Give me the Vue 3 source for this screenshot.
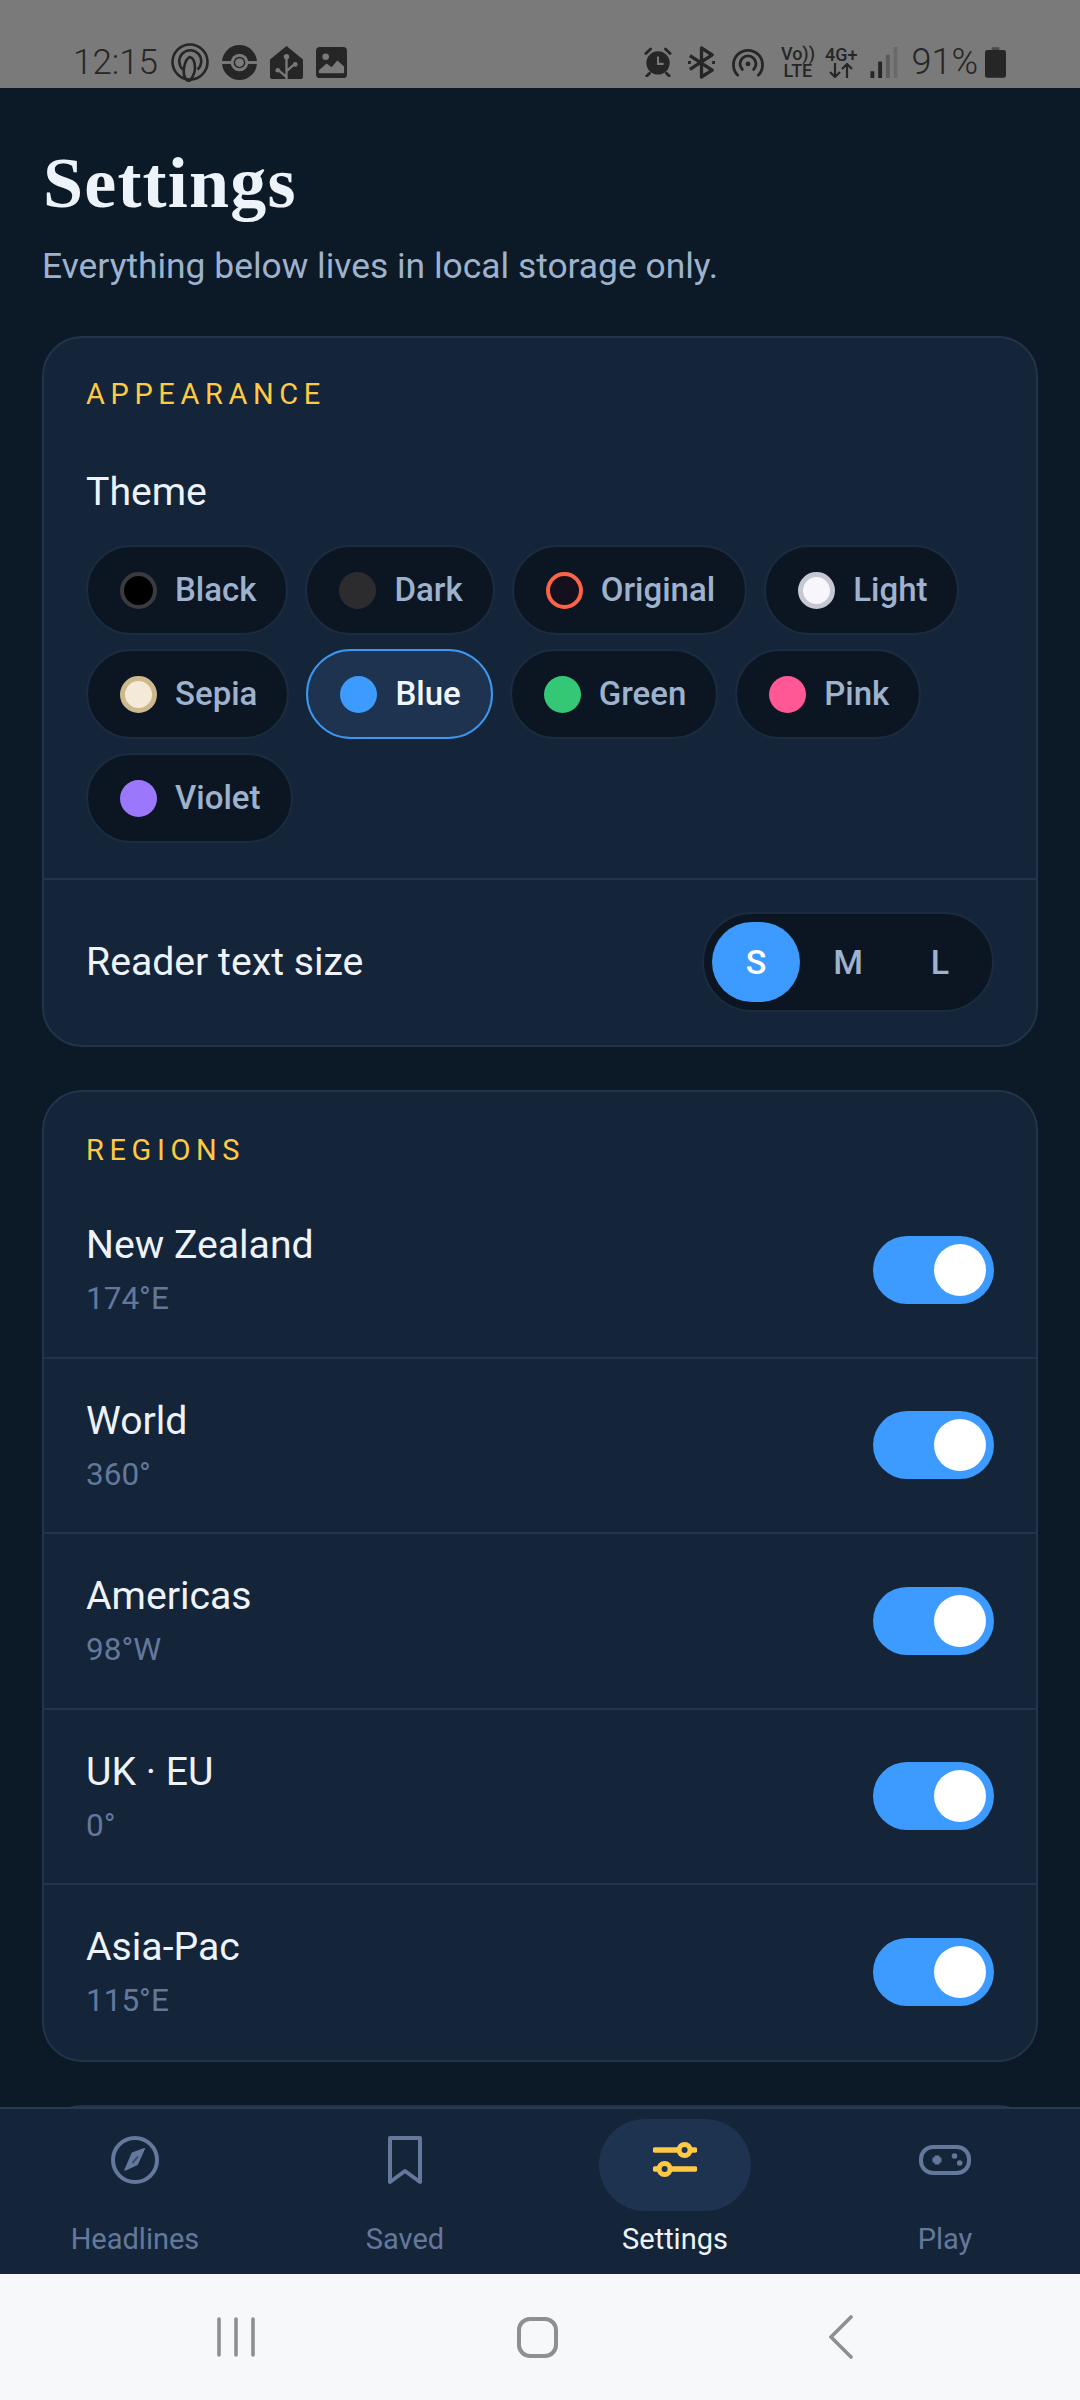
<script setup>
const themes = [
  { name: 'Black', cls: 'd-black' },
  { name: 'Dark', cls: 'd-dark' },
  { name: 'Original', cls: 'd-original' },
  { name: 'Light', cls: 'd-light' },
  { name: 'Sepia', cls: 'd-sepia' },
  { name: 'Blue', cls: 'd-blue', active: true },
  { name: 'Green', cls: 'd-green' },
  { name: 'Pink', cls: 'd-pink' },
  { name: 'Violet', cls: 'd-violet' },
]
const regions = [
  { name: 'New Zealand', sub: '174°E' },
  { name: 'World', sub: '360°' },
  { name: 'Americas', sub: '98°W' },
  { name: 'UK · EU', sub: '0°' },
  { name: 'Asia-Pac', sub: '115°E' },
]
</script>

<template>
  <div class="phone">
    <header class="status">
      <div class="st-left">
        <span class="clock">12:15</span>
        <svg class="si" width="38" height="39" viewBox="0 0 38 39" fill="none" stroke="#262626" stroke-width="2.6"><circle cx="19" cy="19" r="17.500"/><path d="M12 26.500a11 11 0 1 1 14.500 0"/><path d="M19 38c-5 0-7-6-6-13 1-6 3-10 6-11 3 1 5 5 5 11 0 6-3 10-5 13"/></svg>
        <svg class="si" width="35" height="35" viewBox="0 0 36 36"><circle cx="18" cy="18" r="18" fill="#262626"/><rect x="0" y="16.500" width="36" height="3" fill="#7a7a7a"/><circle cx="18" cy="18" r="9" fill="#7a7a7a"/><circle cx="18" cy="18" r="6" fill="#262626"/><circle cx="18" cy="18" r="4.500" fill="#7a7a7a"/></svg>
        <svg class="si" width="33" height="33" viewBox="0 0 34 34"><path d="M17 0 34 14v18a2 2 0 0 1-2 2H2a2 2 0 0 1-2-2V14z" fill="#262626"/><path d="M17 11v23M17 26l8-7M17 32l-8-7" stroke="#7a7a7a" stroke-width="2.400" fill="none"/><circle cx="17" cy="11" r="2.800" fill="#7a7a7a"/><circle cx="26" cy="19" r="2.400" fill="#7a7a7a"/><circle cx="8" cy="25" r="2.400" fill="#7a7a7a"/></svg>
        <svg class="si" width="31" height="31" viewBox="0 0 32 32"><rect width="32" height="32" rx="4" fill="#262626"/><circle cx="10" cy="10" r="3.400" fill="#7a7a7a"/><path d="M3 24l8-7 5 4 6-7 7 6v6a1 1 0 0 1-1 1H4a1 1 0 0 1-1-1z" fill="#7a7a7a"/></svg>
      </div>
      <div class="st-right">
        <svg class="si" width="28" height="30" viewBox="0 0 30 32"><circle cx="15" cy="17" r="12.500" fill="#262626"/><path d="M15 10v8h6" stroke="#7a7a7a" stroke-width="2.200" fill="none"/><path d="M2 7l5-5M28 7l-5-5M6 28l-3 3M24 28l3 3" stroke="#262626" stroke-width="3" stroke-linecap="round"/></svg>
        <svg class="si m1" width="29" height="33" viewBox="0 0 30 34" fill="none" stroke="#262626" stroke-width="3.400" stroke-linejoin="round"><path d="M3 10l23 15-11 7V2l11 7L3 24"/><path d="M1 17h3M26 17h3" stroke-width="3"/></svg>
        <svg class="si m1" width="34" height="30" viewBox="0 0 34 32" fill="none" stroke="#262626" stroke-width="3" stroke-linecap="round"><path d="M6 30a15.500 15.500 0 1 1 22 0"/><path d="M11 24a8.500 8.500 0 1 1 12 0"/><circle cx="17" cy="18" r="2.600" fill="#262626" stroke="none"/></svg>
        <span class="net m2"><span>Vo))</span><span>LTE</span></span>
        <span class="net m-4"><span>4G+</span>
          <svg width="24" height="15" viewBox="0 0 24 15" fill="none" stroke="#262626" stroke-width="2.200"><path d="M6 0v14M1 9l5 5 5-5M18 15V1M13 6l5-5 5 5"/></svg>
        </span>
        <svg class="si m-1" width="28" height="31" viewBox="0 0 28 32"><rect x="0" y="25" width="4" height="7" fill="#262626"/><rect x="8" y="15" width="4" height="17" fill="#262626"/><rect x="16" y="8" width="4" height="24" fill="#5c5c5c"/><rect x="24" y="0" width="4" height="32" fill="#6a6a6a"/></svg>
        <span class="batt m-1">91%</span>
        <svg class="si m-7" width="21" height="31" viewBox="0 0 22 32"><path d="M7 0h8v3H7z" fill="#4a4a4a"/><rect y="3" width="22" height="29" rx="2.500" fill="#262626"/></svg>
      </div>
    </header>

    <main class="page">
      <h1 class="title">Settings</h1>
      <p class="subtitle">Everything below lives in local storage only.</p>

      <section class="card">
        <div class="appearance-top">
          <h2 class="label">APPEARANCE</h2>
          <div class="row-title">Theme</div>
          <div class="chips">
            <div v-for="t in themes" :key="t.name" class="chip" :class="{ on: t.active }">
              <span class="dot" :class="t.cls"></span>
              <span class="chip-text">{{ t.name }}</span>
            </div>
          </div>
        </div>
        <div class="size-row">
          <span class="row-title">Reader text size</span>
          <div class="seg">
            <span class="seg-btn on">S</span>
            <span class="seg-btn">M</span>
            <span class="seg-btn">L</span>
          </div>
        </div>
      </section>

      <section class="card regions">
        <h2 class="label">REGIONS</h2>
        <div v-for="r in regions" :key="r.name" class="region">
          <div class="region-text">
            <div class="row-title">{{ r.name }}</div>
            <div class="region-sub">{{ r.sub }}</div>
          </div>
          <div class="toggle"><span class="knob"></span></div>
        </div>
      </section>

      <section class="card peek"></section>
    </main>

    <nav class="tabs">
      <div class="tab">
        <span class="tab-icon">
          <svg width="48" height="48" viewBox="0 0 48 48" fill="none"><circle cx="24" cy="24" r="22" stroke="#64789c" stroke-width="4"/><path d="M21.300 17.300 33.300 12.700 26.300 28.300 14 34z" fill="#64789c" stroke="#64789c" stroke-width="1.500" stroke-linejoin="round"/><path d="M27 20.500 21.500 27" stroke="#3c4f6e" stroke-width="2"/></svg>
        </span>
        <span class="tab-label">Headlines</span>
      </div>
      <div class="tab">
        <span class="tab-icon">
          <svg width="34" height="48" viewBox="0 0 34 48" fill="none"><path d="M2 2h30v44L17 35 2 46z" stroke="#64789c" stroke-width="4" stroke-linejoin="round"/></svg>
        </span>
        <span class="tab-label">Saved</span>
      </div>
      <div class="tab active">
        <span class="tab-icon">
          <svg width="44" height="36" viewBox="0 0 44 36" fill="none"><path d="M2 8h22M40 8h2M42 27H20M4 27H2" stroke="#ffc943" stroke-width="5.500" stroke-linecap="round"/><circle cx="31.600" cy="8" r="5.500" stroke="#ffc943" stroke-width="5"/><circle cx="11.600" cy="27" r="5.500" stroke="#ffc943" stroke-width="5"/></svg>
        </span>
        <span class="tab-label">Settings</span>
      </div>
      <div class="tab">
        <span class="tab-icon">
          <svg width="52" height="30" viewBox="0 0 52 30" fill="none"><rect x="2" y="2" width="48" height="26" rx="12" stroke="#64789c" stroke-width="4"/><path d="M18 10.500v9M13.500 15h9" stroke="#64789c" stroke-width="5"/><circle cx="35.500" cy="11" r="2.800" fill="#64789c"/><circle cx="40.700" cy="18" r="2.800" fill="#64789c"/></svg>
        </span>
        <span class="tab-label">Play</span>
      </div>
    </nav>

    <footer class="sysnav">
      <svg width="38" height="40" viewBox="0 0 38 40" fill="none" stroke="#8f8f8f" stroke-width="3.600" stroke-linecap="round"><path d="M2 2v36M19 2v36M36 2v36"/></svg>
      <svg class="nav-home" width="41" height="41" viewBox="0 0 41 41" fill="none" stroke="#8f8f8f" stroke-width="4"><rect x="2" y="2" width="37" height="37" rx="11"/></svg>
      <svg class="nav-back" width="24" height="44" viewBox="0 0 24 44" fill="none" stroke="#8f8f8f" stroke-width="3.600" stroke-linecap="round"><path d="M22 2 2 22l20 20"/></svg>
    </footer>
  </div>
</template>

<style scoped>
.phone {
  width: 1080px;
  height: 2400px;
  display: flex;
  flex-direction: column;
  overflow: hidden;
  background: #0c1926;
  font-family: Roboto, "Liberation Sans", sans-serif;
}
.status {
  height: 88px;
  flex: none;
  background: #7a7a7a;
  color: #262626;
  box-sizing: border-box;
  padding: 36px 74px 0 73px;
  display: flex;
  justify-content: space-between;
  align-items: center;
}
.st-left, .st-right { display: flex; align-items: center; }
.st-left { gap: 13px; }
.st-right { gap: 14px; }
.clock { font-size: 35px; font-weight: 300; }
.batt { font-size: 36px; font-weight: 300; }
.si { flex: none; display: block; }
.m1 { margin-left: 1px; }
.m2 { margin-left: 2px; }
.m-1 { margin-left: -1px; }
.m-4 { margin-left: -4px; }
.m-7 { margin-left: -7px; }
.net {
  display: flex;
  flex-direction: column;
  align-items: center;
  font-size: 18px;
  line-height: 17px;
  font-weight: 500;
}
.page {
  flex: 1;
  min-height: 0;
  overflow: hidden;
  padding: 0 42px;
  display: flex;
  flex-direction: column;
  background: #0c1926;
}
.title {
  margin: 57px 0 0 1px;
  font-family: "Liberation Serif", serif;
  font-size: 72px;
  line-height: 76px;
  font-weight: 700;
  letter-spacing: 1.200px;
  color: #edf3fb;
}
.subtitle {
  margin: 22px 0 0 0;
  font-size: 35.400px;
  line-height: 46px;
  color: #9fb2cd;
}
.card {
  flex: none;
  box-sizing: border-box;
  margin-top: 43px;
  background: #142539;
  border: 2px solid #22344b;
  border-radius: 40px;
}
.subtitle + .card { margin-top: 47px; }
.peek { height: 300px; }
.appearance-top { padding: 38px 42px 35px; }
.label {
  margin: 0;
  font-size: 29px;
  line-height: 36px;
  font-weight: 400;
  letter-spacing: 5.600px;
  color: #ffc943;
}
.row-title {
  font-size: 39.200px;
  line-height: 48px;
  color: #eef3fb;
}
.appearance-top .row-title { margin-top: 56px; }
.chips { display: flex; flex-wrap: wrap; gap: 14px 17px; margin-top: 29px; }
.chip {
  box-sizing: border-box;
  height: 90px;
  padding: 0 30px 0 32px;
  display: flex;
  align-items: center;
  gap: 18px;
  background: #0c1623;
  border: 2px solid #1b2b40;
  border-radius: 45px;
  font-size: 33px;
  font-weight: 500;
  color: #9fb2cd;
}
.chip-text { position: relative; top: -1px; }
.chip.on {
  background: #1d3350;
  border-color: #3d97f0;
  color: #f1f6fd;
}
.dot { width: 37px; height: 37px; border-radius: 50%; box-sizing: border-box; flex: none; }
.d-black { background: #000; border: 4px solid #3a3a40; }
.d-dark { background: #2c2c2f; }
.d-original { background: #14101e; border: 4px solid #ff6244; }
.d-light { background: #f6f6fb; border: 5px solid #c6c7d2; }
.d-sepia { background: #f5ead8; border: 5px solid #cdb98c; }
.d-blue { background: #3d9bff; }
.d-green { background: #34c775; }
.d-pink { background: #ff5894; }
.d-violet { background: #9b78fb; }
.size-row {
  border-top: 2px solid #22344b;
  padding: 32px 42px 33px;
  display: flex;
  align-items: center;
  justify-content: space-between;
}
.seg {
  display: flex;
  gap: 4px;
  padding: 8px;
  background: #0c1623;
  border: 2px solid #1b2b40;
  border-radius: 50px;
}
.seg-btn {
  width: 88px;
  height: 80px;
  border-radius: 40px;
  display: flex;
  align-items: center;
  justify-content: center;
  font-size: 34px;
  font-weight: 500;
  color: #9fb2cd;
}
.seg-btn.on { background: #3d9bff; color: #fff; }
.regions { padding: 40px 0 1px; }
.regions .label { padding: 0 42px; margin-bottom: 13px; }
.region {
  height: 175.500px;
  box-sizing: border-box;
  padding: 0 42px;
  display: flex;
  align-items: center;
  justify-content: space-between;
  border-top: 2px solid #22344b;
}
.region:first-of-type { border-top-color: transparent; }
.region-sub { margin-top: 11px; font-size: 31.500px; line-height: 38px; color: #64789c; }
.toggle {
  width: 121px;
  height: 68px;
  border-radius: 34px;
  background: #3d9bff;
  position: relative;
}
.knob {
  position: absolute;
  top: 8px;
  right: 8px;
  width: 52px;
  height: 52px;
  border-radius: 50%;
  background: #fff;
}
.tabs {
  flex: none;
  height: 167px;
  box-sizing: border-box;
  display: grid;
  grid-template-columns: repeat(4, 270px);
  background: #142539;
  border-top: 2px solid #263a52;
}
.tab { display: flex; flex-direction: column; align-items: center; padding-top: 10px; }
.tab-icon {
  width: 152px;
  height: 92px;
  box-sizing: border-box;
  padding-bottom: 10px;
  border-radius: 46px;
  display: flex;
  align-items: center;
  justify-content: center;
}
.active .tab-icon { background: #1e3350; }
.tab-label { margin-top: 10px; font-size: 29px; line-height: 36px; color: #64789c; }
.active .tab-label { color: #edf3fb; }
.sysnav {
  flex: none;
  height: 126px;
  box-sizing: border-box;
  background: #f7f8fa;
  padding: 0 0 0 217px;
  display: flex;
  align-items: center;
}
.nav-home { margin-left: 262px; }
.nav-back { margin-left: 271px; }
</style>
